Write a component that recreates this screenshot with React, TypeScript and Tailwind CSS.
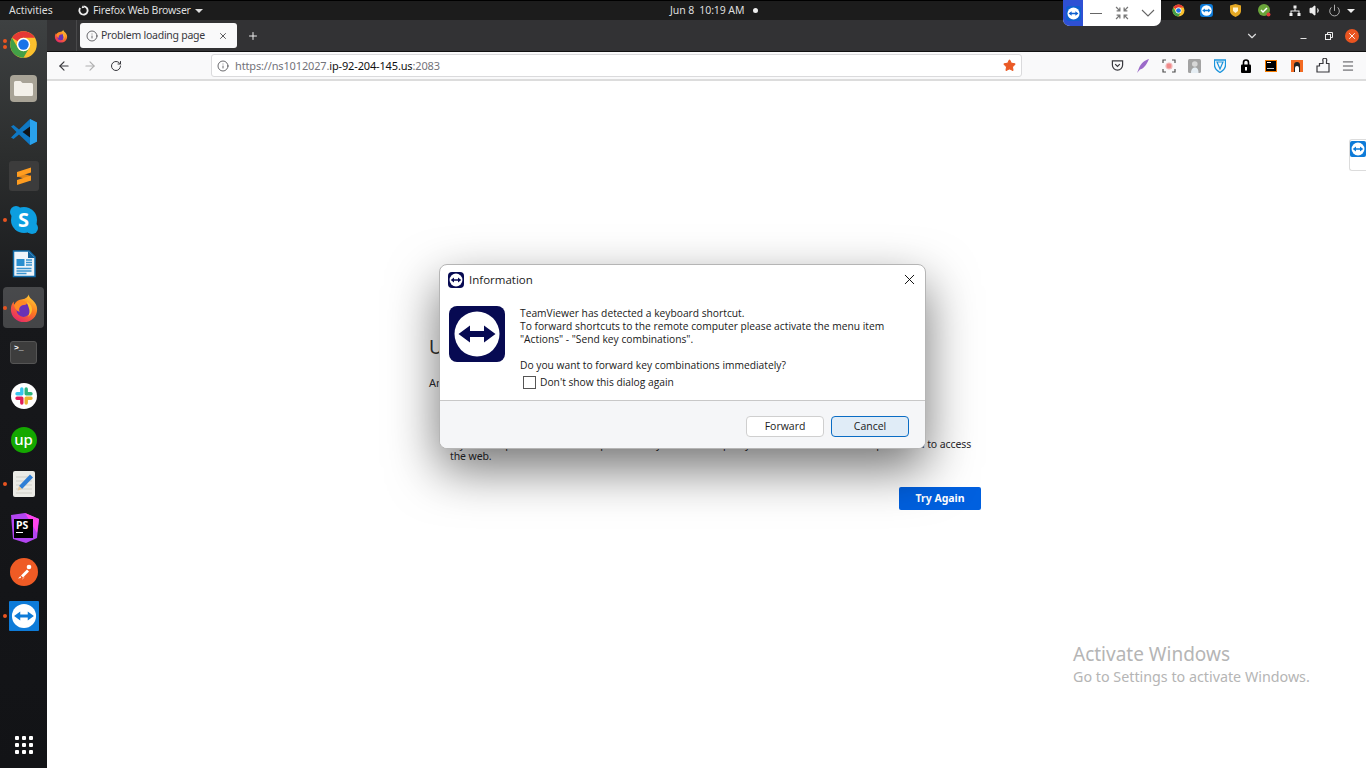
import React from "react";
import { ArrowLeft, ArrowRight, ChevronDown, Info, Menu, Minus, Plus, Power, RotateCw, Star, Volume1, X } from "lucide-react";

const UI_FONT = "font-['Noto_Sans',sans-serif]";
const WIN_FONT = "font-['Open_Sans',sans-serif]";

function TvMark({ size, disc = "#ffffff", arrow = "#070a52" }: { size: number; disc?: string; arrow?: string }) {
  return (
    <svg width={size} height={size} viewBox="0 0 56 56">
      <circle cx="28" cy="28" r="22.5" fill={disc} />
      <path d="M9.5 28 21 19.5V25h14v-5.5L46.5 28 35 36.5V31H21v5.5z" fill={arrow} />
    </svg>
  );
}

function TvSquare({ size, bg, radius }: { size: number; bg: string; radius: number }) {
  return (
    <div className="flex items-center justify-center" style={{ width: size, height: size, background: bg, borderRadius: radius }}>
      <TvMark size={size} arrow={bg} />
    </div>
  );
}

function ChromeIcon({ size }: { size: number }) {
  return (
    <svg width={size} height={size} viewBox="0 0 48 48">
      <circle cx="24" cy="24" r="22" fill="#fbc02d" />
      <path d="M4.95 13A22 22 0 0 1 43.05 13H24a11 11 0 0 0-9.53 5.5z" fill="#e53935" />
      <path d="M4.95 13 14.47 29.5a11 11 0 0 0 19.06 0L24 46A22 22 0 0 1 4.95 13z" fill="#43a047" />
      <circle cx="24" cy="24" r="11" fill="#fff" />
      <circle cx="24" cy="24" r="8.6" fill="#1a73e8" />
    </svg>
  );
}

function FirefoxIcon({ size }: { size: number }) {
  return (
    <svg width={size} height={size} viewBox="0 0 32 32">
      <defs>
        <linearGradient id="ffBody" x1="0.8" y1="0" x2="0.2" y2="1">
          <stop offset="0" stopColor="#ffd43a" />
          <stop offset="0.45" stopColor="#ff7a1f" />
          <stop offset="1" stopColor="#e3216f" />
        </linearGradient>
      </defs>
      <path d="M21 1.5c.4 3 2.6 4.6 4.6 6.6 2.7 2.7 4.4 5.7 4.4 9.4C30 25.2 23.7 31 16 31S2 25.2 2 17.5c0-3.2 1-6.2 3-8.4-.1 1.400.2 2.600.9 3.500C7 8.700 10 7 13 6.800c3.500-.3 7-1.800 8-5.300z" fill="url(#ffBody)" />
      <circle cx="15.500" cy="18" r="7.500" fill="#6a32b5" />
      <path d="M5.500 13c2-4 6.500-5.500 10-4.500 3 .8 4 2.500 3 3.500-1 .900-4 .500-6 2-2 1.500-2 4-1 6-3-.5-5.500-3.500-6-7z" fill="#ff8a24" />
      <path d="M19 9.500c3.500 1.500 6 5 5.500 9-.3 3-2 5.500-4.500 7 2-3 2.500-6.500 1-10-.5-2-1.500-4-2-6z" fill="#ffc02e" />
    </svg>
  );
}

function FilesIcon() {
  return (
    <div className="flex h-[27px] w-[27px] items-center justify-center rounded-[4px] bg-[#a8a396]">
      <svg width="21" height="17" viewBox="0 0 21 17">
        <path d="M1 2.500A1.500 1.500 0 0 1 2.500 1h5L9.500 3h9A1.500 1.500 0 0 1 20 4.500v10a1.500 1.500 0 0 1-1.500 1.500h-16A1.500 1.500 0 0 1 1 14.500z" fill="#f3f0e9" />
      </svg>
    </div>
  );
}

function VsCodeIcon() {
  return (
    <svg width="28" height="28" viewBox="0 0 28 28">
      <path d="M20 1 27 4.500V23.500L20 27 9 16.500 3.500 21 1 19.500 6.500 14 1 8.500 3.500 7 9 11.500z" fill="#0f78c4" />
      <path d="M20 1 27 4.500V23.500L20 27z" fill="#2aa2ec" />
      <path d="M20 8.500 12.500 14l7.500 5.500z" fill="#111418" />
    </svg>
  );
}

function SublimeIcon() {
  return (
    <div className="flex h-[30px] w-[30px] items-center justify-center rounded-[3px] bg-[#3c3c3c]">
      <svg width="16" height="20" viewBox="0 0 16 20">
        <path d="M1 6 15 10v4.500L1 10.500z" fill="#e0861a" />
        <path d="M1 6 15 1.500V6.500L1 11zM1 14 15 9.500v5L1 19z" fill="#ff9d20" />
      </svg>
    </div>
  );
}

function SkypeIcon() {
  return (
    <div className="relative flex h-[26px] w-[26px] items-center justify-center rounded-full bg-[#0d9ee0] text-[20px] font-bold leading-none text-white">
      <span className="absolute left-[-1px] top-[-1px] h-[12px] w-[12px] rounded-full bg-[#0d9ee0]" />
      <span className="absolute bottom-[-1px] right-[-1px] h-[12px] w-[12px] rounded-full bg-[#0d9ee0]" />
      <span className={`relative ${UI_FONT}`}>S</span>
    </div>
  );
}

function WriterIcon() {
  return (
    <svg width="24" height="28" viewBox="0 0 24 28">
      <path d="M1.500 1H17l6 6v19.500H1.500z" fill="#eef4fa" stroke="#0f6aa8" strokeWidth="1.500" />
      <path d="M16 1l7 7h-7z" fill="#0f5f99" />
      <path d="M4.500 9h8v7h-8z" fill="#2a8fd0" />
      <path d="M14 10h6M14 12.500h6M14 15h6M4.500 18.500h15M4.500 21h15M4.500 23.500h10" stroke="#3a94d0" strokeWidth="1.300" />
    </svg>
  );
}

function TerminalIcon() {
  return (
    <div className="h-[23px] w-[27px] rounded-[3px] border border-[#555] bg-[#3d3d3d] pl-[3px] pt-[2px]">
      <span className="block font-['Liberation_Mono',monospace] text-[8px] font-bold leading-[8px] text-white">{">_"}</span>
    </div>
  );
}

function SlackIcon() {
  return (
    <div className="flex h-[26px] w-[26px] items-center justify-center rounded-full bg-white">
      <svg width="18" height="18" viewBox="0 0 18 18">
        <g strokeWidth="3.400" strokeLinecap="round" fill="none">
          <path d="M6.800 2v4.800M2 6.800h4.800" stroke="#36c5f0" />
          <path d="M16 6.800h-4.800M11.200 2v4.800" stroke="#2eb67d" />
          <path d="M11.200 16v-4.800M16 11.200h-4.800" stroke="#ecb22e" />
          <path d="M2 11.200h4.800M6.800 16v-4.800" stroke="#e01e5a" />
        </g>
      </svg>
    </div>
  );
}

function UpworkIcon() {
  return (
    <div className={`flex h-[26px] w-[26px] items-center justify-center rounded-full bg-[#14a800] text-[15px] font-medium leading-none text-white ${UI_FONT}`}>
      <span className="mt-[-2px]">up</span>
    </div>
  );
}

function EditorIcon() {
  return (
    <svg width="24" height="28" viewBox="0 0 24 28">
      <rect x="1" y="1" width="22" height="26" rx="2" fill="#ebebe6" />
      <path d="M4 7h16M4 11h16M4 15h16M4 19h16M4 23h16" stroke="#cfcfc8" strokeWidth="1" />
      <path d="M18 4.500 21 7.500 10 19l-3-3z" fill="#2f7fd6" />
      <path d="M7 16l3 3-4.500 1.800z" fill="#e8c79a" />
    </svg>
  );
}

function PhpStormIcon() {
  return (
    <div className="relative flex h-[30px] w-[30px] items-center justify-center">
      <svg className="absolute inset-0" width="30" height="30" viewBox="0 0 30 30">
        <path d="M2 2 16 0l14 6-2 19-11 5-13-4z" fill="#b345f1" />
        <path d="M16 0l14 6-2 14z" fill="#ff45ed" />
      </svg>
      <div className="relative h-[19px] w-[19px] bg-black px-[2px]">
        <span className={`block text-[10.500px] font-bold leading-[12px] text-white ${UI_FONT}`}>PS</span>
        <span className="mt-[1px] block h-[1px] w-[7px] bg-white" />
      </div>
    </div>
  );
}

function PostmanIcon() {
  return (
    <div className="flex h-[28px] w-[28px] items-center justify-center rounded-full bg-[#ef5b25]">
      <svg width="18" height="18" viewBox="0 0 18 18">
        <circle cx="14" cy="4" r="2.300" fill="#fff" />
        <path d="M12 6.500 6 12.500l2 2 6-6z" fill="#fff" />
        <path d="M5.500 13 3 15.500l3-.5zM8 15l-1 2 3-3.500z" fill="#fff" />
      </svg>
    </div>
  );
}

function GridIcon() {
  return (
    <div className="grid grid-cols-3 gap-[3px]">
      {Array.from({ length: 9 }).map((_, i) => (
        <span key={i} className="h-[4px] w-[4px] rounded-[1px] bg-white" />
      ))}
    </div>
  );
}

function DockItem({ dots = 0, active = false, children }: { dots?: number; active?: boolean; children: React.ReactNode }) {
  return (
    <div className="relative flex h-[44px] w-[47px] items-center justify-center">
      {active && <div className="absolute left-[3px] top-[1px] h-[41px] w-[41px] rounded-[4px] bg-white/20" />}
      {dots > 0 && (
        <div className="absolute left-[3px] top-0 flex h-full flex-col justify-center gap-[2px]">
          {Array.from({ length: dots }).map((_, i) => (
            <span key={i} className="h-[4px] w-[4px] rounded-full bg-[#e95420]" />
          ))}
        </div>
      )}
      <div className="relative">{children}</div>
    </div>
  );
}

function Dock() {
  return (
    <aside className="flex h-full w-[47px] shrink-0 flex-col items-center bg-[linear-gradient(180deg,#3e4142_0%,#2c2e2e_18%,#17181b_40%,#121316_100%)] pt-[2px] pb-[8px]">
      <DockItem dots={2}><ChromeIcon size={29} /></DockItem>
      <DockItem><FilesIcon /></DockItem>
      <DockItem><VsCodeIcon /></DockItem>
      <DockItem><SublimeIcon /></DockItem>
      <DockItem dots={1}><SkypeIcon /></DockItem>
      <DockItem><WriterIcon /></DockItem>
      <DockItem dots={1} active><FirefoxIcon size={30} /></DockItem>
      <DockItem><TerminalIcon /></DockItem>
      <DockItem><SlackIcon /></DockItem>
      <DockItem><UpworkIcon /></DockItem>
      <DockItem dots={1}><EditorIcon /></DockItem>
      <DockItem><PhpStormIcon /></DockItem>
      <DockItem><PostmanIcon /></DockItem>
      <DockItem dots={1}><TvSquare size={30} bg="#0e7bd8" radius={1} /></DockItem>
      <div className="mt-auto flex h-[30px] items-center">
        <GridIcon />
      </div>
    </aside>
  );
}

function TopBar() {
  return (
    <header className={`flex h-[20px] shrink-0 items-center whitespace-nowrap border-t border-black bg-[#1c1c1c] text-[10.500px] text-[#dedede] ${UI_FONT}`}>
      <span className="ml-[9px] w-[69px]">Activities</span>
      <svg width="11" height="11" viewBox="0 0 12 12" fill="none">
        <path d="M6 1.500a4.500 4.500 0 1 1-3.600 1.800" stroke="#eee" strokeWidth="2" />
        <path d="M5 .500 7 3 4 3.500z" fill="#eee" />
      </svg>
      <span className="ml-[4px] w-[97px] tracking-[-0.2px]">Firefox Web Browser</span>
      <span className="ml-[5px] h-0 w-0 border-x-[4px] border-t-[4px] border-x-transparent border-t-[#dedede]" />
      <span className="ml-[467px] w-[83px] tracking-[-0.1px]">Jun 8&nbsp;&nbsp;10:19 AM</span>
      <span className="h-[5px] w-[5px] rounded-full bg-[#eee]" />
      <span className="ml-[414px]"><ChromeIcon size={13} /></span>
      <span className="ml-[15px]"><TvSquare size={13} bg="#0e7bd8" radius={3} /></span>
      <span className="ml-[17px]">
        <svg width="11" height="13" viewBox="0 0 11 13">
          <path d="M5.500 0 11 1.500V7c0 3-3 5-5.500 6C3 12 0 10 0 7V1.500z" fill="#e5a823" />
          <path d="M3 3.500h5v3.500L5.500 9 3 7z" fill="#fff3d0" />
        </svg>
      </span>
      <span className="ml-[17px]">
        <svg width="13" height="13" viewBox="0 0 13 13">
          <circle cx="6" cy="6" r="6" fill="#6aa53a" />
          <path d="M3 6l2 2 4-4" stroke="#fff" strokeWidth="1.500" fill="none" />
          <circle cx="10.500" cy="10.500" r="2" fill="#e03a3a" />
        </svg>
      </span>
      <span className="ml-[18px]">
        <svg width="12" height="12" viewBox="0 0 12 12" fill="#eee">
          <rect x="4.500" y="0.500" width="3" height="3" />
          <rect x="0.500" y="8" width="3" height="3" />
          <rect x="8.500" y="8" width="3" height="3" />
          <path d="M5.500 3.500h1V5.500H10.500V8h-1V6.500h-7V8h-1V5.500H5.500z" />
        </svg>
      </span>
      <Volume1 size={13} className="ml-[8px] text-[#eee]" fill="#eee" />
      <Power size={13} strokeWidth={1.500} className="ml-[6px] text-[#ccc]" />
      <span className="ml-[6px] h-0 w-0 border-x-[4px] border-t-[4px] border-x-transparent border-t-[#eee]" />
    </header>
  );
}

function TabStrip() {
  return (
    <div className={`flex h-[31px] shrink-0 items-center whitespace-nowrap bg-[#323234] ${UI_FONT}`}>
      <span className="ml-[7px] flex w-[22px] justify-start"><FirefoxIcon size={14} /></span>
      <span className="h-full w-px bg-[#48484a]" />
      <div className="ml-[3px] flex h-[25px] w-[157px] items-center rounded-[3px] bg-[#f9f9fa] pl-[6px] pr-[9px] text-[#38383d]">
        <Info size={12} strokeWidth={1.500} />
        <span className="ml-[3px] text-[10.500px] tracking-[-0.25px]">Problem loading page</span>
        <X size={10} className="ml-auto" />
      </div>
      <Plus size={12} className="ml-[10px] text-[#eee]" />
      <ChevronDown size={14} className="ml-[986px] text-[#ddd]" />
      <Minus size={9} strokeWidth={2.500} className="ml-[40px] mt-[5px] text-[#eee]" />
      <svg className="ml-[17px]" width="8" height="8" viewBox="0 0 8 8" fill="none" stroke="#eee">
        <path d="M2.500 2V.500h5v5H6" />
        <rect x=".5" y="2.500" width="5" height="5" />
      </svg>
      <span className="ml-[12px] flex h-[14px] w-[14px] items-center justify-center rounded-full bg-[#e95420]">
        <X size={10} strokeWidth={2.200} className="text-white" />
      </span>
    </div>
  );
}

function Toolbar() {
  const glyph = "shrink-0 w-[25.6px] flex justify-center";
  return (
    <div className={`flex h-[30px] shrink-0 items-center whitespace-nowrap border-t border-[#111] border-b-[2px] border-b-[#dcdcdc] bg-[#f9f9fa] text-[#38383d] ${UI_FONT}`}>
      <ArrowLeft size={14} className="ml-[10px]" />
      <ArrowRight size={14} className="ml-[12px] text-[#b0b0b0]" />
      <RotateCw size={12} className="ml-[13px]" />
      <div className="ml-[89px] flex h-[23px] w-[811px] items-center rounded-[3px] border border-[#dadadc] bg-white pl-[5px] pr-[5px] text-[11px]">
        <Info size={12} strokeWidth={1.500} />
        <span className="ml-[6px] mt-[1px] tracking-[-0.15px] text-[#73737a]">https://ns1012027.<span className="text-[#111]">ip-92-204-145.us</span>:2083</span>
        <Star size={13} className="ml-auto text-[#ea5a26]" fill="#ea5a26" />
      </div>
      <div className="ml-[83px] flex items-center">
        <span className={glyph}>
          <svg width="13" height="13" viewBox="0 0 14 14" fill="none" stroke="#38383d" strokeWidth="1.300">
            <path d="M1.500 2h11v4.500a5.500 5.500 0 0 1-11 0z" />
            <path d="M4.500 5.500 7 8l2.500-2.500" />
          </svg>
        </span>
        <span className={glyph}>
          <svg width="12" height="14" viewBox="0 0 12 14">
            <path d="M12 0C8 1 4 4 2 9l-2 5 3-3.500C7 9.500 10 5 12 0z" fill="#9b6ac9" />
          </svg>
        </span>
        <span className={glyph}>
          <svg width="14" height="14" viewBox="0 0 14 14" fill="none" stroke="#4c4c4c" strokeWidth="1.200">
            <path d="M1 4V1h3M10 1h3v3M13 10v3h-3M4 13H1v-3" />
            <circle cx="7" cy="7" r="3" fill="#f08a8a" stroke="#f3b8b8" />
          </svg>
        </span>
        <span className={glyph}>
          <svg width="13" height="14" viewBox="0 0 13 14">
            <rect width="13" height="14" rx="1.500" fill="#a3a3a3" />
            <circle cx="6.800" cy="5" r="2.800" fill="#d8d8d8" />
            <path d="M3 14c0-4 2-5.500 4-5.500s3.500 1.500 3.500 5.500z" fill="#e6eef4" />
          </svg>
        </span>
        <span className={glyph}>
          <svg width="12" height="14" viewBox="0 0 12 14" fill="none">
            <path d="M.500 1h11v5c0 3-3 6-5.500 7.500C3.500 12 .500 9 .500 6z" stroke="#1a94dc" strokeWidth="1.300" />
            <path d="M3 3h6L6 10z" stroke="#1a94dc" strokeWidth="1.200" />
          </svg>
        </span>
        <span className={glyph}>
          <svg width="10" height="14" viewBox="0 0 10 14">
            <path d="M2.500 6V3.500a2.500 2.500 0 0 1 5 0V6" fill="none" stroke="#000" strokeWidth="1.600" />
            <rect y="5.500" width="10" height="8.500" rx="1" fill="#000" />
            <rect x="4" y="8" width="2" height="3.500" fill="#fff" />
          </svg>
        </span>
        <span className={glyph}>
          <div className="h-[12px] w-[12px] border border-[#f57c00] bg-black p-[1px]">
            <div className="h-[1px] w-[4px] bg-white" />
            <div className="mt-[5px] h-[1px] w-[7px] bg-[#ccc]" />
          </div>
        </span>
        <span className={glyph}>
          <div className="flex h-[12px] w-[12px] items-end justify-center bg-[#f26a21]">
            <div className="h-[10px] w-[6px] rounded-t-full bg-[#222] px-[1px] pt-[4px]">
              <div className="h-[6px] rounded-t-full bg-white" />
            </div>
          </div>
        </span>
        <span className={glyph}>
          <svg width="14" height="15" viewBox="0 0 14 15" fill="none" stroke="#38383d" strokeWidth="1.200">
            <path d="M1 14V8h2.500V5.500H7V3a2 2 0 1 1 3.500 0V5.500H13V14z" />
          </svg>
        </span>
        <span className={glyph}>
          <Menu size={14} strokeWidth={1.500} />
        </span>
      </div>
    </div>
  );
}

function ErrorPage() {
  return (
    <main className={`relative min-h-0 flex-1 bg-white pl-[382px] pt-[254px] text-[#2a2a2e] ${UI_FONT}`}>
      <div className="w-[552px]">
        <h1 className="text-[19px] leading-[24px] text-[#333]">Unable to connect</h1>
        <p className="mt-[17px] text-[11px] leading-[14px]">An error occurred during a connection to ns1012027.ip-92-204-145.us:2083.</p>
        <p className="mt-[48px] pl-[21px] text-[10.500px] leading-[12px] tracking-[-0.1px]">If your computer or network is protected by a firewall or proxy, make sure that Firefox is permitted to access the web.</p>
        <div className="mt-[25px] flex justify-end">
          <button className="h-[23px] w-[82px] rounded-[2px] bg-[#0060df] text-[10.500px] font-bold text-white">Try Again</button>
        </div>
      </div>

      <div className="absolute right-0 top-[58px] flex h-[32px] w-[17px] items-start rounded-l-[3px] border-y border-l border-[#dcdcdc] bg-white pt-[1px]">
        <TvSquare size={16} bg="#0e7bd8" radius={2} />
      </div>

      <div className="absolute left-[1026px] top-[560px] whitespace-nowrap text-[#b5b5b5]">
        <p className="text-[19px] leading-[26px]">Activate Windows</p>
        <p className="mt-[1px] text-[14.300px] leading-[18px]">Go to Settings to activate Windows.</p>
      </div>
    </main>
  );
}

function InfoDialog() {
  return (
    <div className={`absolute left-[439px] top-[264px] flex h-[185px] w-[487px] flex-col overflow-hidden rounded-[8px] border border-[#b5b5b5] bg-white text-[#1a1a1a] shadow-[0_20px_50px_rgba(0,0,0,0.55)] ${WIN_FONT}`}>
      <div className="flex h-[30px] shrink-0 items-center pb-[1px] pl-[8px] pr-[7px]">
        <TvSquare size={16} bg="#070a52" radius={4} />
        <span className="ml-[5px] text-[11.500px]">Information</span>
        <X size={17} strokeWidth={1.300} className="ml-auto text-black" />
      </div>
      <div className="flex min-h-0 flex-1 pl-[9px] pt-[11px]">
        <TvSquare size={56} bg="#070a52" radius={8} />
        <div className="ml-[15px] pt-[1px] text-[10.250px] leading-[13px]">
          <p>TeamViewer has detected a keyboard shortcut.</p>
          <p>To forward shortcuts to the remote computer please activate the menu item</p>
          <p>"Actions" - "Send key combinations".</p>
          <p className="mt-[13px]">Do you want to forward key combinations immediately?</p>
          <label className="mt-[4px] flex items-center pl-[3px]">
            <span className="h-[13px] w-[13px] border border-[#555] bg-white" />
            <span className="ml-[4px]">Don't show this dialog again</span>
          </label>
        </div>
      </div>
      <div className="flex h-[48px] shrink-0 items-start justify-end gap-[7px] border-t border-[#c8c8c8] bg-[#f5f6f8] pr-[16px] pt-[15px] text-[10.500px]">
        <button className="h-[21px] w-[78px] rounded-[4px] border border-[#cfcfcf] bg-white">Forward</button>
        <button className="h-[21px] w-[78px] rounded-[4px] border border-[#0a6cc4] bg-[#e0ecf7]">Cancel</button>
      </div>
    </div>
  );
}

function RemoteBar() {
  return (
    <div className="absolute left-[1063px] top-0 flex h-[26px] w-[98px] items-center overflow-hidden rounded-b-[7px] bg-white text-[#555]">
      <div className="flex h-full w-[20px] items-center justify-center bg-[#2e50d4]">
        <TvSquare size={15} bg="#0e5fd0" radius={3} />
      </div>
      <span className="ml-[7px] h-px w-[12px] bg-[#666]" />
      <svg className="ml-[13px]" width="14" height="14" viewBox="0 0 13 13" fill="none" stroke="#777" strokeWidth="1.200">
        <path d="M1 1l3.500 3.500M4.500 1.500v3h-3M12 1 8.500 4.500M8.500 1.500v3h3M1 12l3.500-3.500M4.500 11.500v-3h-3M12 12 8.500 8.500M8.500 11.500v-3h3" />
      </svg>
      <svg className="ml-[12px]" width="14" height="8" viewBox="0 0 14 8" fill="none" stroke="#666" strokeWidth="1.100">
        <path d="M1 1l6 6 6-6" />
      </svg>
    </div>
  );
}

export default function App() {
  return (
    <div className="relative flex h-[768px] w-[1366px] flex-col overflow-hidden bg-[#141518]">
      <TopBar />
      <div className="flex min-h-0 flex-1">
        <Dock />
        <div className="flex min-w-0 flex-1 flex-col">
          <TabStrip />
          <Toolbar />
          <ErrorPage />
        </div>
      </div>
      <InfoDialog />
      <RemoteBar />
    </div>
  );
}
